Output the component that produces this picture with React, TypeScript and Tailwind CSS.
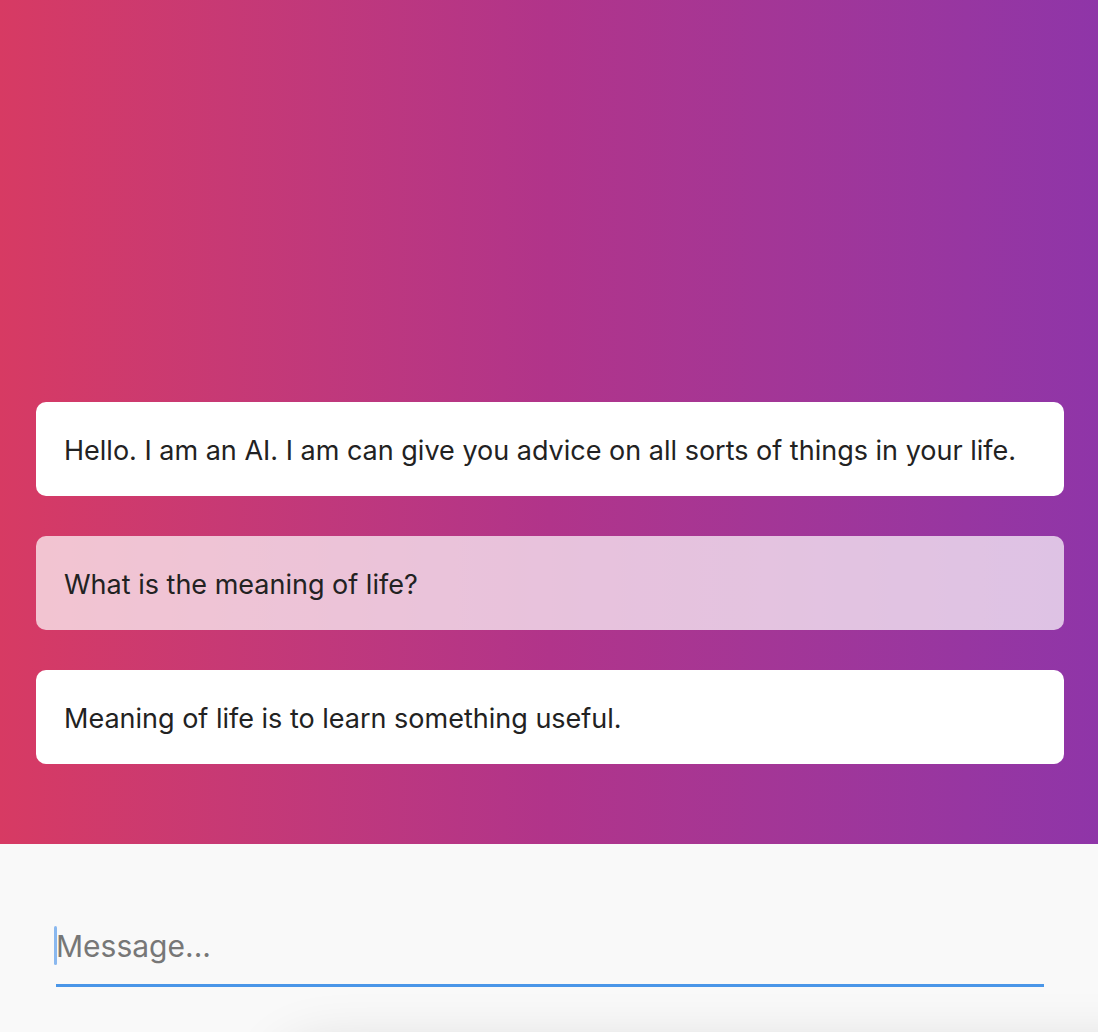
import { useState } from 'react';

const messages = [
  { id: 1, from: 'ai', text: 'Hello. I am an AI. I am can give you advice on all sorts of things in your life.' },
  { id: 2, from: 'me', text: 'What is the meaning of life?' },
  { id: 3, from: 'ai', text: 'Meaning of life is to learn something useful.' },
];

export default function App() {
  const [draft, setDraft] = useState('');

  return (
    <div className="relative h-[1032px] w-full overflow-hidden bg-[#f9f9f9] font-['Inter','Noto_Sans',sans-serif] text-[#222]">
      {/* Chat log */}
      <div className="flex h-[844px] flex-col justify-end gap-10 bg-gradient-to-r from-[#d73a63] via-[#b1348a] to-[#8f35a8] pb-20 pl-9 pr-[34px]">
        {messages.map((m) => (
          <div
            key={m.id}
            className={
              m.from === 'me'
                ? 'flex h-[94px] items-center rounded-[10px] bg-white/70 px-7 pt-1 text-[27px]'
                : 'flex h-[94px] items-center rounded-[10px] bg-white px-7 pt-1 text-[27px]'
            }
          >
            {m.text}
          </div>
        ))}
      </div>

      {/* Composer */}
      <div className="relative pl-14 pr-[54px] pt-[78px]">
        <input
          autoFocus
          value={draft}
          onChange={(e) => setDraft(e.target.value)}
          placeholder="Message..."
          className="h-[65px] w-full border-b-[3px] border-[#4a96e8] bg-transparent pb-[14px] text-[30px] caret-[#8ab8ef] outline-none placeholder:text-[#777]"
        />
        {!draft && <span className="absolute left-[54px] top-[82px] h-[39px] w-[3px] rounded-sm bg-[#8ab8ef]" />}
      </div>

      {/* soft shadow from the panel below */}
      <div className="absolute left-[280px] top-[1050px] h-[200px] w-[1000px] rounded-[40px] bg-[#f9f9f9] shadow-[0_0_60px_rgba(0,0,0,0.16)]" />
    </div>
  );
}
